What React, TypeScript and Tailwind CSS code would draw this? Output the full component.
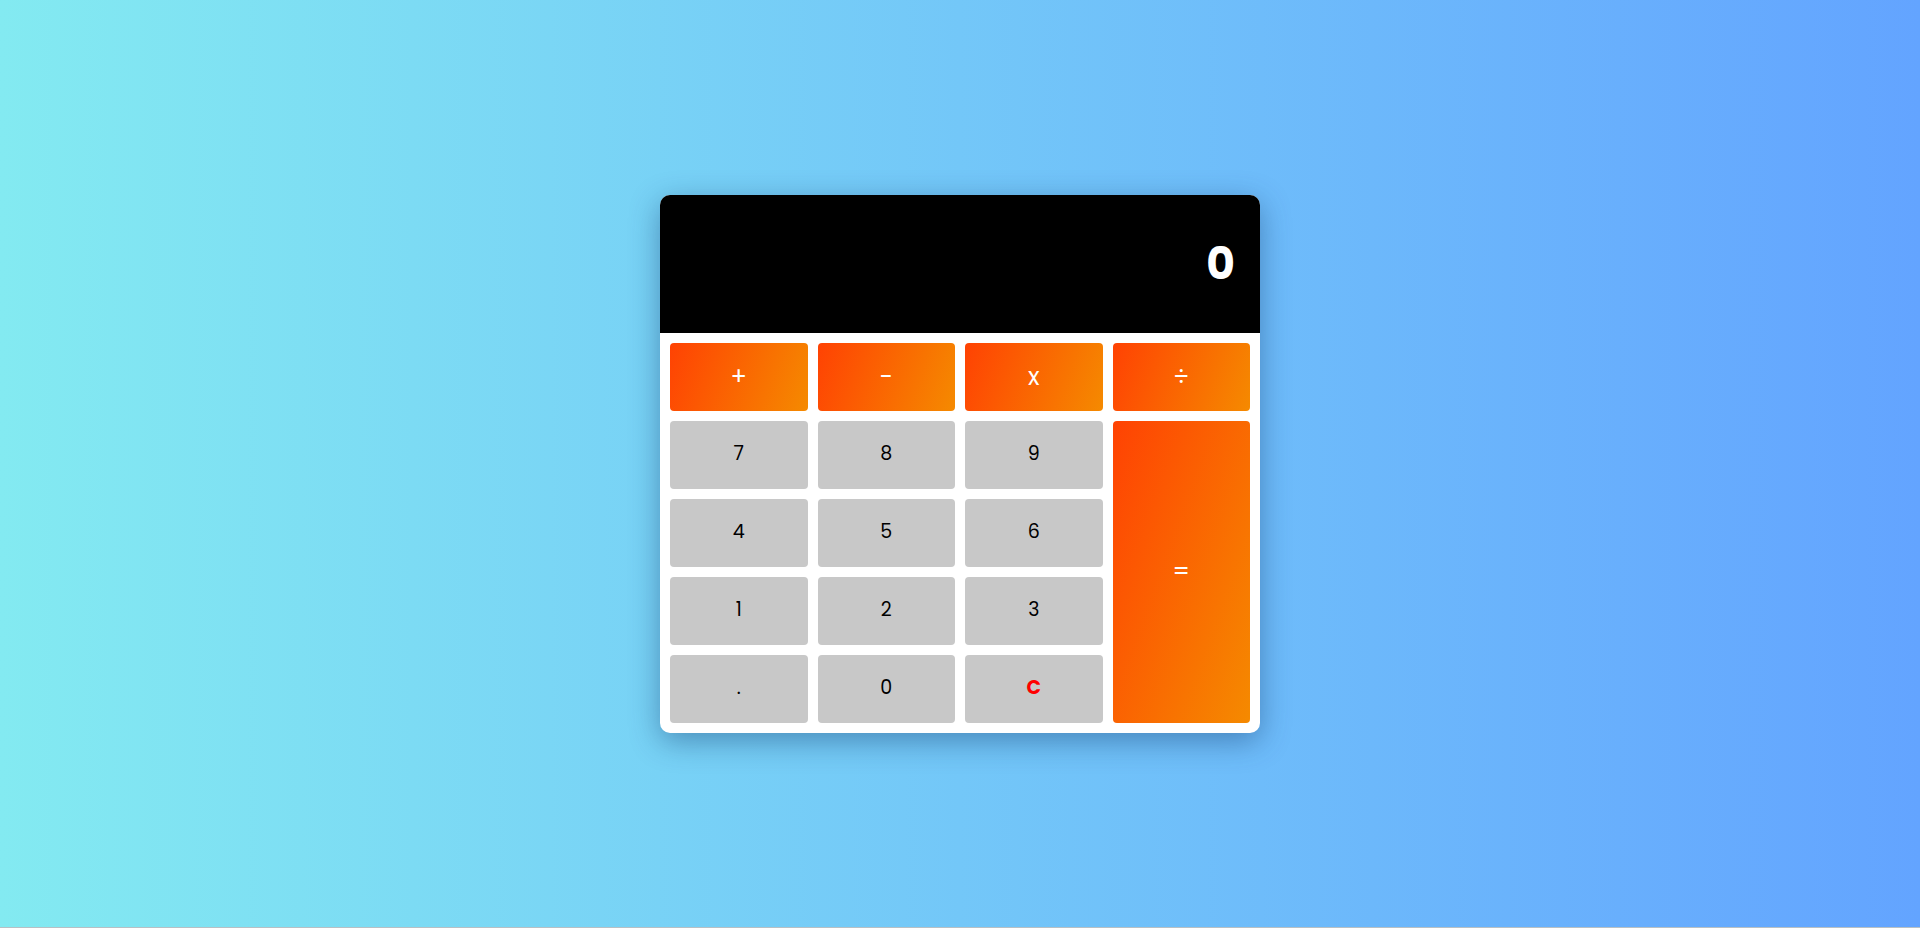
import { useState } from "react";

// Простой калькулятор: чёрное табло сверху, сетка 4×5 под ним.
// Операторы и «=» — оранжевый градиент, цифры — серые плитки.

const OPS = ["+", "-", "x", "÷"];
const DIGITS = ["7", "8", "9", "4", "5", "6", "1", "2", "3", ".", "0", "C"];

const orange = "bg-[linear-gradient(110deg,#ff4203,#f58a00)] text-white";

export default function App() {
  const [value, setValue] = useState("0");

  const press = (k: string) => {
    if (k === "C") return setValue("0");
    setValue((v) => (v === "0" && k !== "." ? k : v + k));
  };

  return (
    <div className="font-['Poppins','Inter',sans-serif]">
      <div className="h-[927px] w-full flex items-center justify-center bg-[linear-gradient(to_right,#83eaf1,#63a4ff)]">
        <div className="w-[600px] bg-white rounded-[10px] overflow-hidden shadow-[0_8px_30px_rgba(20,60,110,0.45)]">
          <div className="h-[138px] bg-black flex items-center justify-end pr-[25px]">
            <span className="text-white font-bold text-[44px] leading-none">{value}</span>
          </div>
          <div className="grid grid-cols-4 grid-rows-[repeat(5,68px)] gap-[10px] p-[10px]">
            {OPS.map((op) => (
              <button
                key={op}
                type="button"
                onClick={() => press(op)}
                className={`${orange} rounded-[4px] text-[24px] flex items-center justify-center`}
              >
                {op}
              </button>
            ))}
            {DIGITS.slice(0, 3).map((d) => (
              <button
                key={d}
                type="button"
                onClick={() => press(d)}
                className="bg-[#c8c8c8] rounded-[4px] text-[19px] text-black flex items-center justify-center"
              >
                {d}
              </button>
            ))}
            <button
              type="button"
              className={`${orange} row-span-4 rounded-[4px] text-[24px] flex items-center justify-center`}
            >
              =
            </button>
            {DIGITS.slice(3).map((d) => (
              <button
                key={d}
                type="button"
                onClick={() => press(d)}
                className={`bg-[#c8c8c8] rounded-[4px] text-[19px] flex items-center justify-center ${
                  d === "C" ? "text-[#ff0000] font-bold" : "text-black"
                }`}
              >
                {d}
              </button>
            ))}
          </div>
        </div>
      </div>
      <div className="h-px bg-[#b8c0c4]" />
    </div>
  );
}
